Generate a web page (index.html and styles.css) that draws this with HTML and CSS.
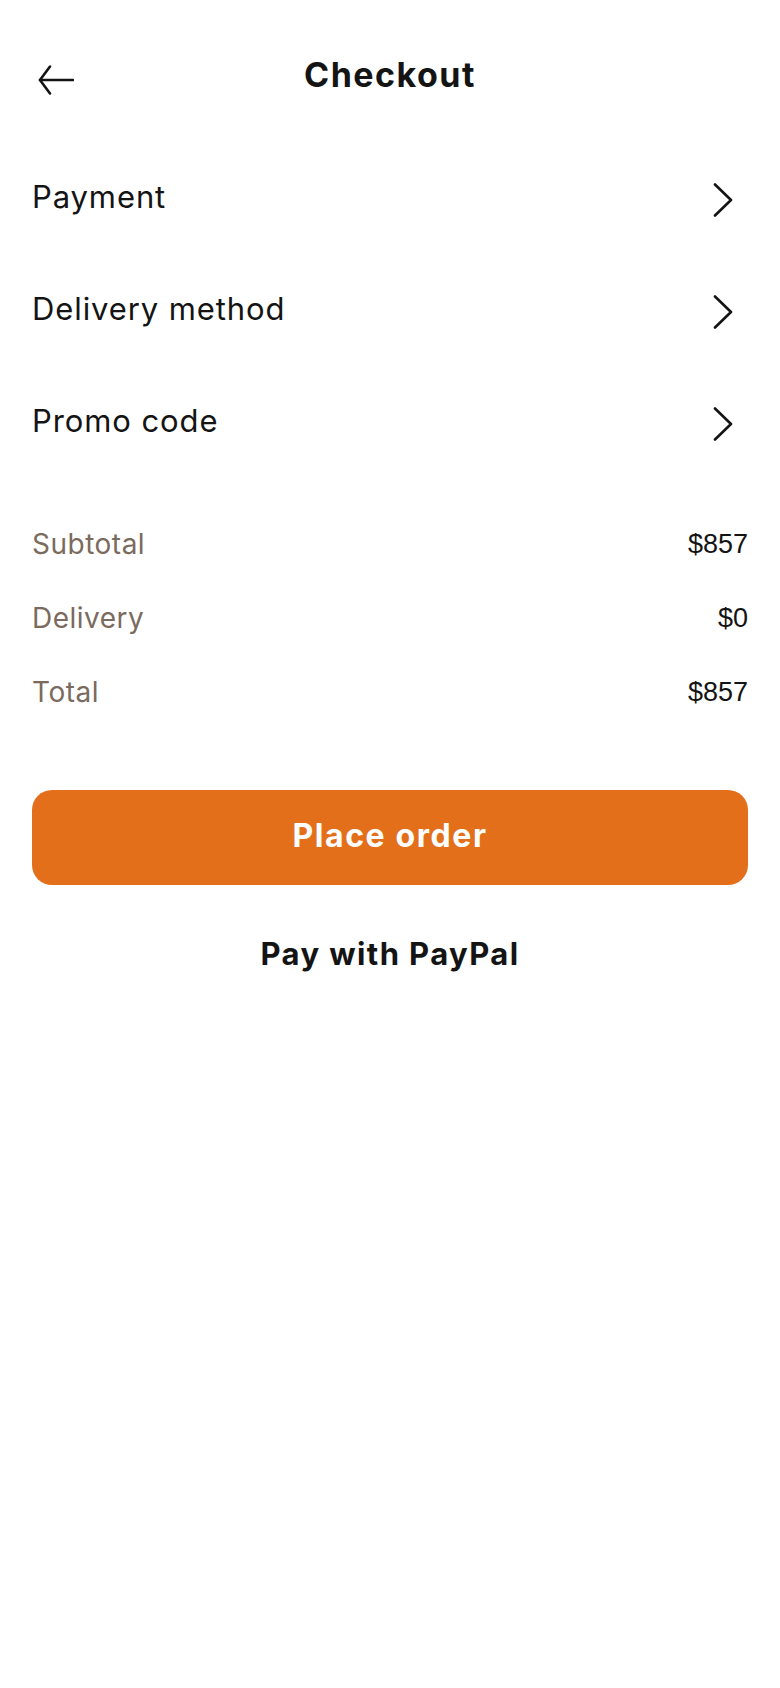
FILE: index.html
```html
<!DOCTYPE html>
<html lang="en">
<head>
<meta charset="utf-8">
<title>Checkout</title>
<link rel="stylesheet" href="styles.css">
</head>
<body>
<div class="screen">
  <header class="topbar">
    <button class="back" aria-label="Back">
      <svg width="36" height="30" viewBox="0 0 36 30" fill="none" stroke="#141414" stroke-width="2.6" stroke-linecap="round" stroke-linejoin="round">
        <path d="M35 15H2"/>
        <path d="M12 1.5L2 15l10 13.5"/>
      </svg>
    </button>
    <h1 class="title">Checkout</h1>
  </header>

  <nav class="options">
    <div class="option">
      <span class="option-label">Payment</span>
      <svg class="chev" width="20" height="34" viewBox="0 0 20 34" fill="none" stroke="#141414" stroke-width="2.6" stroke-linecap="round" stroke-linejoin="round"><path d="M2 1.5L18 17 2 32.5"/></svg>
    </div>
    <div class="option">
      <span class="option-label">Delivery method</span>
      <svg class="chev" width="20" height="34" viewBox="0 0 20 34" fill="none" stroke="#141414" stroke-width="2.6" stroke-linecap="round" stroke-linejoin="round"><path d="M2 1.5L18 17 2 32.5"/></svg>
    </div>
    <div class="option">
      <span class="option-label">Promo code</span>
      <svg class="chev" width="20" height="34" viewBox="0 0 20 34" fill="none" stroke="#141414" stroke-width="2.6" stroke-linecap="round" stroke-linejoin="round"><path d="M2 1.5L18 17 2 32.5"/></svg>
    </div>
  </nav>

  <section class="summary">
    <div class="sum-row"><span class="sum-label">Subtotal</span><span class="sum-value">$857</span></div>
    <div class="sum-row"><span class="sum-label">Delivery</span><span class="sum-value">$0</span></div>
    <div class="sum-row"><span class="sum-label">Total</span><span class="sum-value">$857</span></div>
  </section>

  <button class="place">Place order</button>
  <div class="paypal">Pay with PayPal</div>
</div>
</body>
</html>
```

FILE: styles.css
```css
* { box-sizing: border-box; }
html, body { margin: 0; padding: 0; background: #ffffff; }
body {
  font-family: Inter, "Noto Sans", sans-serif;
  color: #141414;
}
.screen {
  width: 780px;
  min-height: 1688px;
  padding: 0 32px 0 32px;
}
.topbar {
  position: relative;
  height: 140px;
  padding-top: 30px;
  display: flex;
  align-items: flex-start;
  justify-content: center;
}
.back {
  position: absolute;
  left: 6px;
  top: 65px;
  padding: 0;
  border: 0;
  background: none;
  display: block;
  line-height: 0;
}
.title {
  margin: 0;
  height: 90px;
  line-height: 90px;
  font-size: 34px;
  font-weight: 700;
  letter-spacing: 1.5px;
}
.options {
  display: flex;
  flex-direction: column;
}
.option {
  height: 112px;
  display: flex;
  align-items: center;
  justify-content: space-between;
  padding-right: 15px;
}
.option-label {
  font-size: 31px;
  font-weight: 400;
  letter-spacing: 0.9px;
}
.chev { display: block; margin-top: 8px; }
.summary {
  margin-top: 31px;
  display: flex;
  flex-direction: column;
}
.sum-row {
  height: 74px;
  display: flex;
  align-items: center;
  justify-content: space-between;
}
.sum-label {
  font-size: 28px;
  color: #7b6a5e;
  letter-spacing: 0.5px;
}
.sum-value {
  font-family: "Liberation Sans", Arial, sans-serif;
  font-size: 27px;
  color: #141414;
}
.place {
  display: block;
  width: 716px;
  height: 95px;
  margin-top: 61px;
  padding: 0 0 5px 0;
  border: 0;
  border-radius: 20px;
  background: #e46f1b;
  color: #ffffff;
  font-family: Inter, "Noto Sans", sans-serif;
  font-size: 32px;
  font-weight: 700;
  letter-spacing: 1.6px;
}
.paypal {
  margin-top: 39px;
  height: 60px;
  line-height: 60px;
  text-align: center;
  font-size: 31px;
  font-weight: 700;
  letter-spacing: 1.4px;
}
```
